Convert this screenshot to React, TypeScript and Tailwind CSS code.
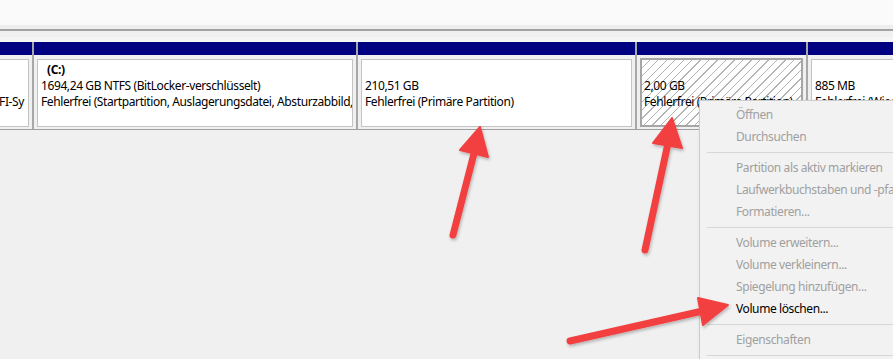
import type { ReactNode } from "react";

interface MenuEntry {
  label?: string;
  enabled?: boolean;
  separator?: boolean;
}

const menu: MenuEntry[] = [
  { label: "Öffnen" },
  { label: "Durchsuchen" },
  { separator: true },
  { label: "Partition als aktiv markieren" },
  { label: "Laufwerkbuchstaben und -pfade ändern..." },
  { label: "Formatieren..." },
  { separator: true },
  { label: "Volume erweitern..." },
  { label: "Volume verkleinern..." },
  { label: "Spiegelung hinzufügen..." },
  { label: "Volume löschen...", enabled: true },
  { separator: true },
  { label: "Eigenschaften" },
  { separator: true },
];

function Block({
  width,
  children,
  selected,
  grow,
  cut,
}: {
  width?: string;
  children: ReactNode;
  selected?: boolean;
  grow?: boolean;
  cut?: boolean;
}) {
  return (
    <div className={`${width ?? ""} ${grow ? "flex-1" : "shrink-0"} flex flex-col`}>
      <div className="h-[13px] bg-[#000080]" />
      <div className={`h-[74px] bg-[#f0f0f0] pt-[3px] pb-[2px] pr-[3px] flex ${cut ? "pl-0" : "pl-[3px]"}`}>
        {selected ? (
          <div className="flex-1 border-2 border-[#a6a6a6] bg-white bg-[image:repeating-linear-gradient(135deg,transparent_0_5px,#b4b4b4_5px_6px)] pt-[2px] pl-[2px] overflow-hidden">
            {children}
          </div>
        ) : (
          <div className={`flex-1 mt-[1px] border border-[#c4c4c4] bg-white pt-[2px] pl-[3px] overflow-hidden ${cut ? "border-l-0" : ""}`}>
            {children}
          </div>
        )}
      </div>
    </div>
  );
}

function Line({ children, bold, indent }: { children?: ReactNode; bold?: boolean; indent?: boolean }) {
  return (
    <div
      className={`h-4 leading-4 whitespace-nowrap ${bold ? "font-bold" : ""} ${indent ? "pl-[6px]" : ""}`}
    >
      {children ?? "\u00a0"}
    </div>
  );
}

function Arrow({ tail, tip, w1, w2 }: { tail: number[]; tip: number[]; w1: number[]; w2: number[] }) {
  const bx = (w1[0] + w2[0]) / 2;
  const by = (w1[1] + w2[1]) / 2;
  return (
    <g>
      <line x1={tail[0]} y1={tail[1]} x2={bx} y2={by} stroke="#f24141" strokeWidth={7} strokeLinecap="round" />
      <polygon points={`${tip[0]},${tip[1]} ${w1[0]},${w1[1]} ${w2[0]},${w2[1]}`} fill="#f24141" stroke="#f24141" strokeWidth={2} strokeLinejoin="round" />
    </g>
  );
}

export default function App() {
  return (
    <div className="relative w-[893px] h-[359px] overflow-hidden bg-[#f0f0f0] text-[12px] tracking-[-0.4px] text-black font-['Noto_Sans','Liberation_Sans',sans-serif]">
      <div className="h-[25px] bg-[#fafafa]" />
      <div className="h-[4px] bg-[#ededed]" />
      <div className="h-[2px] bg-[#a3a3a3]" />
      <div className="h-[6px] bg-[#f0f0f0]" />
      <div className="h-[5px] bg-[#f5f5f5]" />

      <div className="flex gap-[2px] bg-[#a8a8a8] border-b border-[#a0a0a0]">
        <Block width="w-[32px]" cut>
          <div className="flex flex-col items-end pr-[4px]">
            <Line />
            <Line />
            <Line>Fehlerfrei (EFI-Sy</Line>
          </div>
        </Block>
        <Block width="w-[322px]">
          <Line bold indent>(C:)</Line>
          <Line>1694,24 GB NTFS (BitLocker-verschlüsselt)</Line>
          <Line>Fehlerfrei (Startpartition, Auslagerungsdatei, Absturzabbild, Primäre Partition)</Line>
        </Block>
        <Block width="w-[277px]">
          <Line />
          <Line>210,51 GB</Line>
          <Line>Fehlerfrei (Primäre Partition)</Line>
        </Block>
        <Block width="w-[169px]" selected>
          <Line />
          <Line>2,00 GB</Line>
          <Line>Fehlerfrei (Primäre Partition)</Line>
        </Block>
        <Block grow>
          <Line />
          <Line>885 MB</Line>
          <Line>Fehlerfrei (Wiederherstellungspartition)</Line>
        </Block>
      </div>

      <div className="absolute left-[699px] top-[100px] w-[230px] h-[280px] bg-[#f2f2f2] border border-[#cccccc] shadow-[2px_2px_4px_rgba(0,0,0,0.2)] pt-[3px]">
        {menu.map((m, i) =>
          m.separator ? (
            <div key={i} className="h-[9px] flex items-center pl-[7px]">
              <div className="h-px flex-1 bg-[#d7d7d7]" />
            </div>
          ) : (
            <div
              key={i}
              className={`h-[22px] leading-[22px] pl-[36px] whitespace-nowrap ${m.enabled ? "text-black" : "text-[#a0a0a0]"}`}
            >
              {m.label}
            </div>
          )
        )}
      </div>

      <svg className="absolute inset-0 pointer-events-none" width={893} height={359}>
        <defs>
          <filter id="sh" x="-20%" y="-20%" width="140%" height="140%">
            <feDropShadow dx="1" dy="2" stdDeviation="1.5" floodColor="#000" floodOpacity="0.25" />
          </filter>
        </defs>
        <g filter="url(#sh)">
          <Arrow tail={[453, 235]} tip={[480, 127]} w1={[460, 150]} w2={[488, 157]} />
          <Arrow tail={[645, 250]} tip={[672, 118]} w1={[653, 143]} w2={[682, 148]} />
          <Arrow tail={[570, 341]} tip={[728, 305]} w1={[698, 298]} w2={[703, 325]} />
        </g>
      </svg>
    </div>
  );
}
